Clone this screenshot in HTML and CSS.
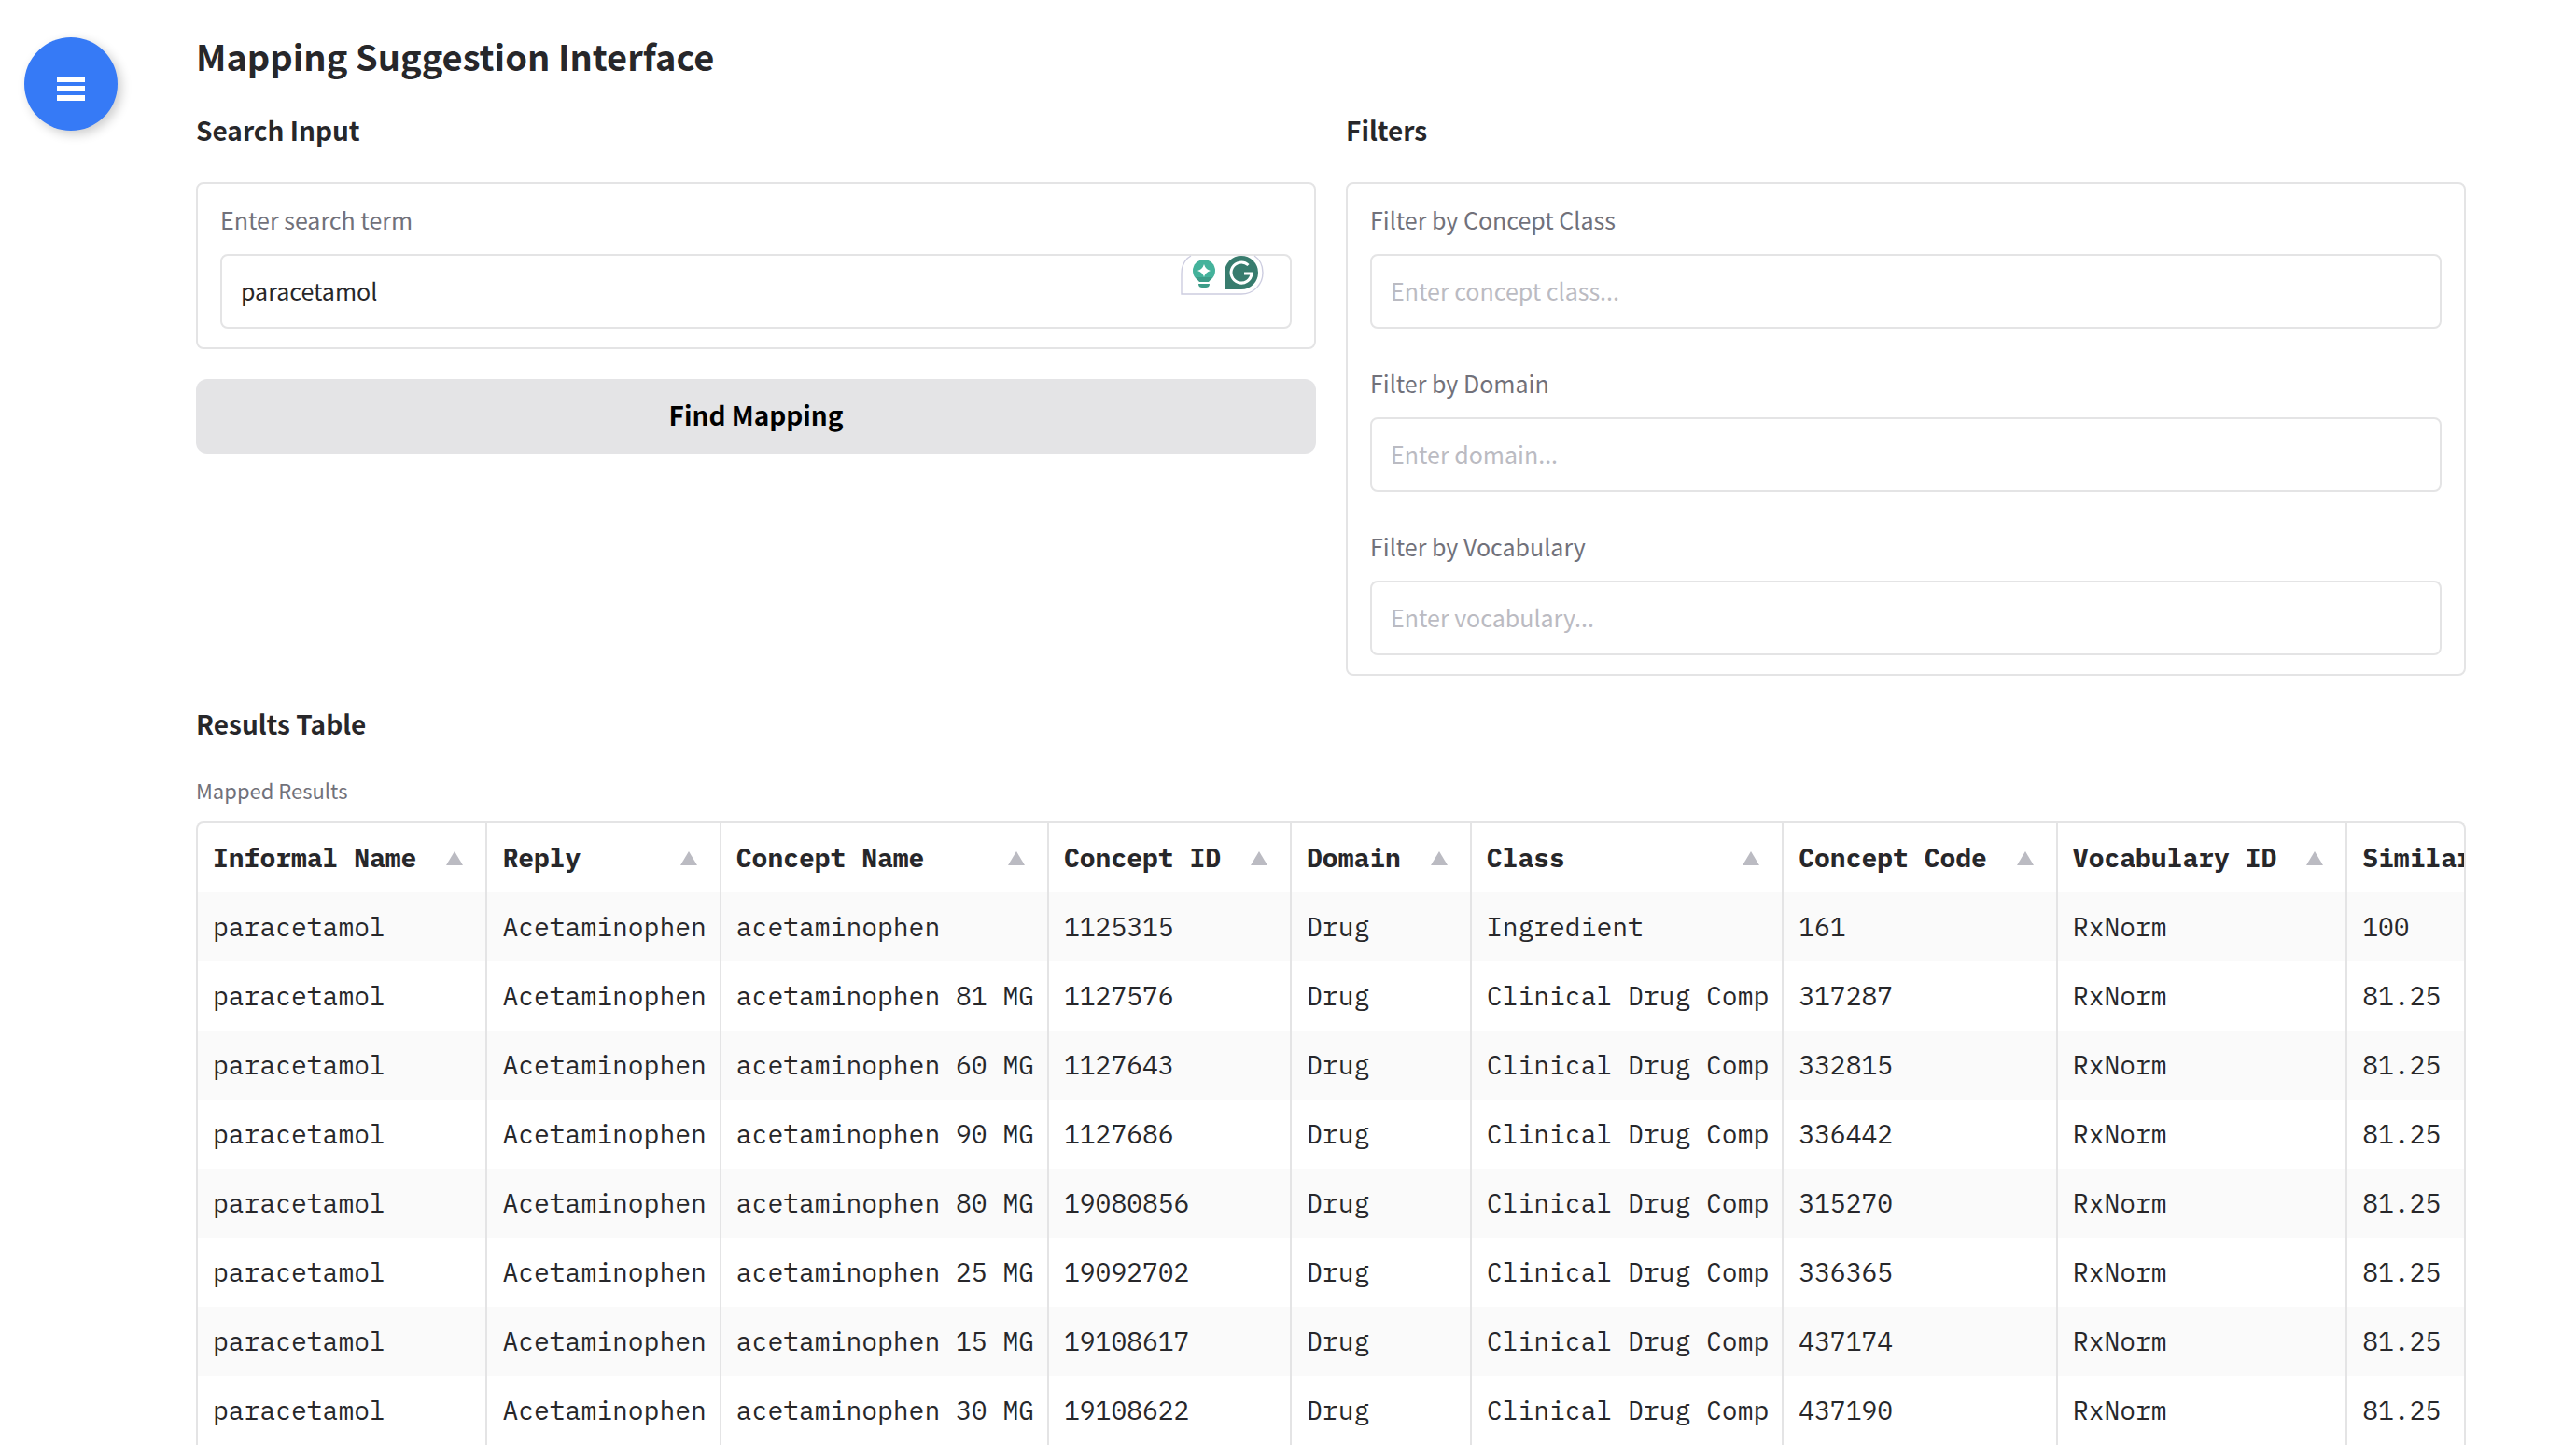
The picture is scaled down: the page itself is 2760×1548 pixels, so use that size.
FILE: index.html
```html
<!DOCTYPE html>
<html lang="en">
<head>
<meta charset="utf-8">
<title>Mapping Suggestion Interface</title>
<link rel="stylesheet" href="styles.css">
</head>
<body>
<button class="menu-button" type="button" aria-label="Menu">
  <svg class="menu-icon" viewBox="0 0 30 26" aria-hidden="true"><path d="M0 0h30v6H0zM0 10h30v6H0zM0 20h30v6H0z"/></svg>
</button>
<main class="page">
  <h1 class="title">Mapping Suggestion Interface</h1>
  <div class="columns">
    <section class="column">
      <h2 class="heading">Search Input</h2>
      <div class="panel">
        <div class="field">
          <label class="label" for="term">Enter search term</label>
          <div class="input-wrap">
            <input class="input" id="term" type="text" value="paracetamol" spellcheck="false">
            <svg class="assistant" viewBox="0 0 90 44" aria-hidden="true">
              <path d="M1 42V20C1 12 4 5 11 1H79C85 5 88 12 88 19C88 32 78 42 65 42Z" fill="#fff"/>
              <path d="M11 1C4 5 1 12 1 20V42H65C78 42 88 32 88 19C88 12 85 5 79 1" fill="none" stroke="#cdcde0" stroke-width="1.4"/>
              <circle cx="25" cy="17" r="12" fill="#44b29b"/>
              <path d="M16 24h18l-4 5H20zM19 31h12c0 3-2 4-4 4h-4c-2 0-4-1-4-4z" fill="#3c9c88"/>
              <path d="M25 10q1.500 5.500 7 7q-5.500 1.500-7 7q-1.500-5.500-7-7q5.500-1.500 7-7z" fill="#fff"/>
              <path d="M47 37V19A18 18 0 1 1 65 37Z" fill="#387c6e"/>
              <path d="M72.500 11A11 11 0 1 0 76 20H68" fill="none" stroke="#fff" stroke-width="3"/>
            </svg>
          </div>
        </div>
      </div>
      <button class="find-button" type="button">Find Mapping</button>
    </section>
    <section class="column">
      <h2 class="heading">Filters</h2>
      <div class="panel">
        <div class="field">
          <label class="label" for="class">Filter by Concept Class</label>
          <input class="input" id="class" type="text" placeholder="Enter concept class...">
        </div>
        <div class="field">
          <label class="label" for="domain">Filter by Domain</label>
          <input class="input" id="domain" type="text" placeholder="Enter domain...">
        </div>
        <div class="field">
          <label class="label" for="vocabulary">Filter by Vocabulary</label>
          <input class="input" id="vocabulary" type="text" placeholder="Enter vocabulary...">
        </div>
      </div>
    </section>
  </div>
  <section class="results">
    <h2 class="heading">Results Table</h2>
    <p class="caption" id="caption">Mapped Results</p>
    <div class="table-wrap">
      <table class="table" aria-labelledby="caption">
        <colgroup><col class="col-name"></colgroup>
        <thead>
          <tr>
            <th><div class="head">Informal Name<span class="sort"></span></div></th>
            <th><div class="head">Reply<span class="sort"></span></div></th>
            <th><div class="head">Concept Name<span class="sort"></span></div></th>
            <th><div class="head">Concept ID<span class="sort"></span></div></th>
            <th><div class="head">Domain<span class="sort"></span></div></th>
            <th><div class="head">Class<span class="sort"></span></div></th>
            <th><div class="head">Concept Code<span class="sort"></span></div></th>
            <th><div class="head">Vocabulary ID<span class="sort"></span></div></th>
            <th><div class="head">Similarity Score<span class="sort"></span></div></th>
          </tr>
        </thead>
        <tbody>
          <tr><td>paracetamol</td><td>Acetaminophen</td><td>acetaminophen</td><td>1125315</td><td>Drug</td><td>Ingredient</td><td>161</td><td>RxNorm</td><td>100</td></tr>
          <tr><td>paracetamol</td><td>Acetaminophen</td><td>acetaminophen 81 MG</td><td>1127576</td><td>Drug</td><td>Clinical Drug Comp</td><td>317287</td><td>RxNorm</td><td>81.25</td></tr>
          <tr><td>paracetamol</td><td>Acetaminophen</td><td>acetaminophen 60 MG</td><td>1127643</td><td>Drug</td><td>Clinical Drug Comp</td><td>332815</td><td>RxNorm</td><td>81.25</td></tr>
          <tr><td>paracetamol</td><td>Acetaminophen</td><td>acetaminophen 90 MG</td><td>1127686</td><td>Drug</td><td>Clinical Drug Comp</td><td>336442</td><td>RxNorm</td><td>81.25</td></tr>
          <tr><td>paracetamol</td><td>Acetaminophen</td><td>acetaminophen 80 MG</td><td>19080856</td><td>Drug</td><td>Clinical Drug Comp</td><td>315270</td><td>RxNorm</td><td>81.25</td></tr>
          <tr><td>paracetamol</td><td>Acetaminophen</td><td>acetaminophen 25 MG</td><td>19092702</td><td>Drug</td><td>Clinical Drug Comp</td><td>336365</td><td>RxNorm</td><td>81.25</td></tr>
          <tr><td>paracetamol</td><td>Acetaminophen</td><td>acetaminophen 15 MG</td><td>19108617</td><td>Drug</td><td>Clinical Drug Comp</td><td>437174</td><td>RxNorm</td><td>81.25</td></tr>
          <tr><td>paracetamol</td><td>Acetaminophen</td><td>acetaminophen 30 MG</td><td>19108622</td><td>Drug</td><td>Clinical Drug Comp</td><td>437190</td><td>RxNorm</td><td>81.25</td></tr>
        </tbody>
      </table>
    </div>
  </section>
</main>
</body>
</html>
```
FILE: styles.css
```css
* { box-sizing: border-box; }

body {
  margin: 0;
  background: #fff;
  color: #27272a;
  font-family: "Source Sans Pro", "Noto Sans CJK SC", sans-serif;
  font-size: 25px;
}

.menu-button {
  position: fixed;
  top: 40px;
  left: 26px;
  width: 100px;
  height: 100px;
  padding: 10px 0 0;
  display: flex;
  align-items: center;
  justify-content: center;
  border: 0;
  border-radius: 50%;
  background: #367af6;
  box-shadow: 4px 4px 12px rgba(0, 0, 0, 0.2);
}

.menu-icon { width: 30px; height: 26px; fill: #fff; }

.page { padding: 32px 118px 0 210px; }

.title {
  margin: 0;
  font-size: 38px;
  line-height: 56px;
  font-weight: 700;
}

.columns {
  display: grid;
  grid-template-columns: 1fr 1fr;
  gap: 32px;
  margin-top: 28px;
}

.column { display: flex; flex-direction: column; gap: 32px; }

.heading {
  margin: 0;
  font-size: 28px;
  line-height: 47px;
  font-weight: 700;
}

.panel {
  display: flex;
  flex-direction: column;
  gap: 40px;
  padding: 20px 24px;
  border: 2px solid #e4e4e5;
  border-radius: 8px;
}

.label {
  display: block;
  margin-bottom: 19px;
  line-height: 36px;
  color: #71717a;
}

.input-wrap { position: relative; }

.input {
  display: block;
  width: 100%;
  height: 80px;
  padding: 0 20px 2px;
  border: 2px solid #e4e4e5;
  border-radius: 8px;
  background: #fff;
  color: #27272a;
  font: inherit;
}

.input::placeholder { color: #bbbbc2; opacity: 1; }

.assistant {
  position: absolute;
  top: 1px;
  right: 29px;
  width: 90px;
  height: 44px;
}

.find-button {
  height: 80px;
  padding: 0 0 4px;
  border: 0;
  border-radius: 12px;
  background: #e4e4e6;
  color: #000;
  font: inherit;
  font-size: 28px;
  font-weight: 700;
}

.results { margin-top: 28px; }

.caption {
  margin: 30px 0 17px;
  font-size: 22px;
  line-height: 34px;
  color: #71717a;
}

.table-wrap {
  overflow: hidden;
  border: 2px solid #e4e4e5;
  border-bottom: 0;
  border-radius: 8px 8px 0 0;
}

.table {
  border-collapse: separate;
  border-spacing: 0;
  font-family: "IBM Plex Mono", "Liberation Mono", monospace;
  font-size: 28px;
  line-height: 42px;
  white-space: nowrap;
}

.col-name { width: 312px; }

.table th, .table td {
  height: 74px;
  padding: 0 14px 0 16px;
  border-right: 2px solid #e4e4e5;
  text-align: left;
}

.head {
  display: flex;
  align-items: center;
  justify-content: space-between;
  gap: 32px;
  padding-right: 10px;
}

.sort {
  border: solid transparent;
  border-width: 0 9px 15px;
  border-bottom-color: #bbbbc2;
}

.table tbody tr:nth-child(odd) { background: #fafafa; }
```
